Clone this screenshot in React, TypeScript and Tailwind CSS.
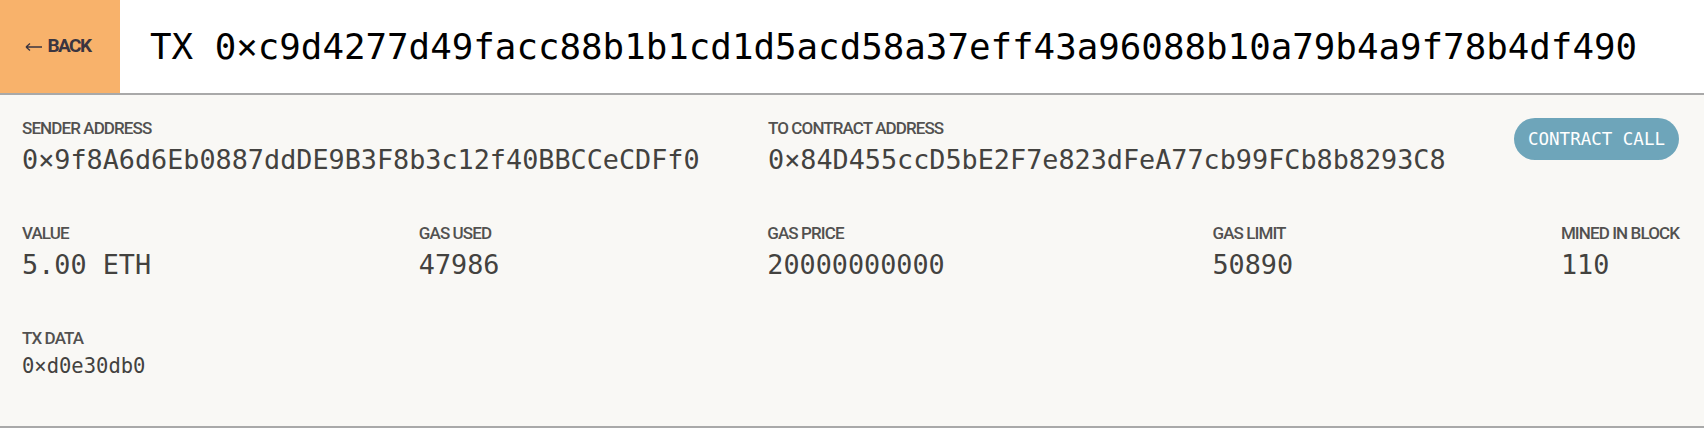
const mono = { fontFamily: '"DejaVu Sans Mono", "Liberation Mono", monospace' };
const cond = { fontFamily: 'Roboto, "Liberation Sans", sans-serif' };

function Field({ label, value, small }: { label: string; value: string; small?: boolean }) {
  return (
    <div className="flex flex-col">
      <span style={cond} className="text-[17px] leading-[20px] font-medium tracking-[-0.9px] text-[#525150]">
        {label}
      </span>
      <span
        style={mono}
        className={
          small
            ? "mt-[6px] text-[20.5px] leading-[24px] text-[#43423f]"
            : "mt-[6px] text-[26.8px] leading-[32px] text-[#43423f]"
        }
      >
        {value}
      </span>
    </div>
  );
}

export default function App() {
  return (
    <div className="w-[1704px] bg-white">
      <header className="flex h-[95px] items-center border-b-2 border-[#a9a9a9] bg-white">
        <button
          style={cond}
          className="flex h-full w-[120px] items-center justify-center gap-[5px] bg-[#f8b26b] pr-[4px] text-[19px] font-bold tracking-[-1.5px] text-[#3b3540]"
        >
          <svg width="17" height="10" viewBox="0 0 17 10" className="mt-[1px]">
            <path d="M1 5H17M1 5L5 1.5M1 5L5 8.5" stroke="#3b3540" strokeWidth="1.3" fill="none" />
          </svg>
          BACK
        </button>
        <h1 style={mono} className="ml-[30px] text-[35.8px] leading-none text-black">
          TX 0×c9d4277d49facc88b1b1cd1d5acd58a37eff43a96088b10a79b4a9f78b4df490
        </h1>
      </header>

      <main className="flex flex-col gap-[47px] border-b-2 border-[#a9a9a9] bg-[#f9f8f5] pl-[22px] pr-[25px] pt-[23px] pb-[48px]">
        <div className="flex items-start justify-between">
          <Field label="SENDER ADDRESS" value="0×9f8A6d6Eb0887ddDE9B3F8b3c12f40BBCCeCDFf0" />
          <Field label="TO CONTRACT ADDRESS" value="0×84D455ccD5bE2F7e823dFeA77cb99FCb8b8293C8" />
          <span
            style={mono}
            className="flex h-[42px] w-[165px] items-center justify-center rounded-full bg-[#6ea5ba] text-[17.5px] text-white"
          >
            CONTRACT CALL
          </span>
        </div>

        <div className="flex items-start justify-between">
          <Field label="VALUE" value="5.00 ETH" />
          <Field label="GAS USED" value="47986" />
          <Field label="GAS PRICE" value="20000000000" />
          <Field label="GAS LIMIT" value="50890" />
          <Field label="MINED IN BLOCK" value="110" />
        </div>

        <div className="flex">
          <Field label="TX DATA" value="0×d0e30db0" small />
        </div>
      </main>
    </div>
  );
}
